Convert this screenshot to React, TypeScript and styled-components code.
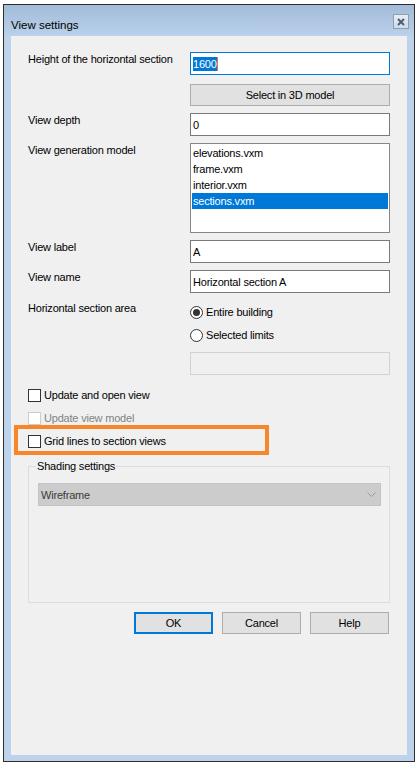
import * as React from "react"
import styled, { createGlobalStyle } from "styled-components"

const GlobalStyle = createGlobalStyle`
    body {
        margin: 0;
        background: #fff;
        font-family: "Liberation Sans", Arial, sans-serif;
    }
`

const Screen = styled.div`
    padding: 4px 0 0 3px;
`

const Window = styled.div`
    width: 412px;
    height: 758px;
    box-sizing: border-box;
    border: 1px solid #2e2e2e;
    background: #bcd3eb;
    display: flex;
    flex-direction: column;
    padding: 0 7px 6px 7px;
`

const TitleBar = styled.div`
    height: 31px;
    flex: none;
    margin: 0 -7px;
    padding: 9px 5px 0 7px;
    box-sizing: border-box;
    display: flex;
    justify-content: space-between;
    align-items: flex-start;
    background: linear-gradient(#a2bbd8, #bad1ea);
`

const Title = styled.span`
    margin-top: 4px;
    font-size: 11.5px;
    line-height: 14px;
    color: #000;
`

const CloseButton = styled.div`
    width: 16px;
    height: 15px;
    box-sizing: border-box;
    border: 1px solid #8d9db2;
    background: linear-gradient(#e6edf5, #cfdbe8);
    display: flex;
    align-items: center;
    justify-content: center;
`

const Client = styled.div`
    flex: 1;
    background: #f0f0f0;
    padding: 16px 17px 0 17px;
    font-size: 11px;
    letter-spacing: -0.2px;
    color: #000;
`

const FieldRow = styled.div<{ $gap?: number }>`
    display: grid;
    grid-template-columns: 162px 200px;
    align-items: start;
    margin-top: ${p => p.$gap ?? 0}px;
`

const FieldLabel = styled.div`
    padding-top: 1px;
    line-height: 13px;
`

const TextBox = styled.div<{ $focused?: boolean }>`
    height: 23px;
    box-sizing: border-box;
    border: 1px solid ${p => (p.$focused ? "#0078d7" : "#7a7a7a")};
    background: #fff;
    padding: 4px 2px 0 2px;
    line-height: 14px;
    white-space: nowrap;
`

const Selection = styled.span`
    background: #0078d7;
    color: #fff;
    border-right: 1px solid #e07a30;
    display: inline-block;
    line-height: 14px;
`

const DisabledBox = styled.div`
    height: 23px;
    margin-top: 1px;
    box-sizing: border-box;
    border: 1px solid #d2d2d2;
    background: #f0f0f0;
`

const PushButton = styled.div<{ $default?: boolean; $width?: number }>`
    grid-column: 2;
    width: ${p => (p.$width ? `${p.$width}px` : "auto")};
    height: 22px;
    box-sizing: border-box;
    border: ${p => (p.$default ? "2px solid #0078d7" : "1px solid #adadad")};
    background: #e1e1e1;
    display: flex;
    align-items: center;
    justify-content: center;
    line-height: 14px;
`

const ListBox = styled.div`
    height: 90px;
    box-sizing: border-box;
    border: 1px solid #828790;
    background: #fff;
    padding: 1px;
`

const ListItem = styled.div<{ $selected?: boolean }>`
    height: 16px;
    line-height: 16px;
    padding-left: 1px;
    background: ${p => (p.$selected ? "#0078d7" : "transparent")};
    color: ${p => (p.$selected ? "#fff" : "#000")};
`

const RadioList = styled.div`
    display: flex;
    flex-direction: column;
    gap: 9px;
    padding-top: 4px;
`

const RadioItem = styled.label`
    display: flex;
    align-items: center;
    gap: 3px;
    height: 14px;
    line-height: 14px;
`

const RadioMark = styled.span<{ $checked?: boolean }>`
    width: 13px;
    height: 13px;
    box-sizing: border-box;
    border: 1px solid #333;
    border-radius: 50%;
    background: #fff;
    display: flex;
    align-items: center;
    justify-content: center;

    &::after {
        content: "";
        display: ${p => (p.$checked ? "block" : "none")};
        width: 7px;
        height: 7px;
        border-radius: 50%;
        background: #333;
    }
`

const CheckList = styled.div`
    display: flex;
    flex-direction: column;
    gap: 9px;
    margin-top: 13px;
`

const CheckRow = styled.label<{ $disabled?: boolean; $marked?: boolean }>`
    position: relative;
    display: flex;
    align-items: center;
    gap: 3px;
    height: 14px;
    line-height: 14px;
    color: ${p => (p.$disabled ? "#838383" : "#000")};

    &::after {
        content: "";
        display: ${p => (p.$marked ? "block" : "none")};
        position: absolute;
        left: -14px;
        top: -9px;
        width: 255px;
        height: 30px;
        box-sizing: border-box;
        border: 4px solid #f7852a;
        pointer-events: none;
    }
`

const CheckMark = styled.span<{ $disabled?: boolean }>`
    width: 13px;
    height: 13px;
    box-sizing: border-box;
    border: 1px solid ${p => (p.$disabled ? "#cccccc" : "#333")};
    background: #fff;
`

const GroupBox = styled.fieldset`
    margin: 12px 0 0 0;
    width: 362px;
    height: 143px;
    box-sizing: border-box;
    border: 1px solid #dcdcdc;
    padding: 10px 8px 0 9px;
    min-width: 0;
`

const Legend = styled.legend`
    padding: 0 1px;
    margin-left: -2px;
    line-height: 13px;
`

const ComboBox = styled.div`
    height: 23px;
    box-sizing: border-box;
    border: 1px solid #c4c4c4;
    background: #cccccc;
    color: #3a3a3a;
    display: flex;
    align-items: center;
    justify-content: space-between;
    padding: 0 4px 0 2px;
`

const ButtonBar = styled.div`
    width: 361px;
    display: flex;
    justify-content: flex-end;
    gap: 9px;
    margin-top: 9px;
`

const CloseGlyph = () => (
    <svg width="8" height="8" viewBox="0 0 8 8">
        <path d="M1 1 L7 7 M7 1 L1 7" stroke="#4e5d73" strokeWidth="2" />
    </svg>
)

const Chevron = () => (
    <svg width="9" height="6" viewBox="0 0 9 6">
        <path d="M0.5 0.5 L4.5 4.5 L8.5 0.5" fill="none" stroke="#9a9a9a" strokeWidth="1" />
    </svg>
)

const models = ["elevations.vxm", "frame.vxm", "interior.vxm", "sections.vxm"]

const App: React.FunctionComponent = () => {
    const [selectedModel] = React.useState("sections.vxm")

    return <Screen>
        <GlobalStyle />
        <Window>
            <TitleBar>
                <Title>View settings</Title>
                <CloseButton><CloseGlyph /></CloseButton>
            </TitleBar>
            <Client>
                <FieldRow>
                    <FieldLabel>Height of the horizontal section</FieldLabel>
                    <TextBox $focused><Selection>1600</Selection></TextBox>
                </FieldRow>
                <FieldRow $gap={9}>
                    <PushButton>Select in 3D model</PushButton>
                </FieldRow>
                <FieldRow $gap={7}>
                    <FieldLabel>View depth</FieldLabel>
                    <TextBox>0</TextBox>
                </FieldRow>
                <FieldRow $gap={7}>
                    <FieldLabel>View generation model</FieldLabel>
                    <ListBox>
                        {models.map(m => <ListItem key={m} $selected={m == selectedModel}>{m}</ListItem>)}
                    </ListBox>
                </FieldRow>
                <FieldRow $gap={7}>
                    <FieldLabel>View label</FieldLabel>
                    <TextBox>A</TextBox>
                </FieldRow>
                <FieldRow $gap={7}>
                    <FieldLabel>View name</FieldLabel>
                    <TextBox>Horizontal section A</TextBox>
                </FieldRow>
                <FieldRow $gap={8}>
                    <FieldLabel>Horizontal section area</FieldLabel>
                    <RadioList>
                        <RadioItem><RadioMark $checked />Entire building</RadioItem>
                        <RadioItem><RadioMark />Selected limits</RadioItem>
                        <DisabledBox />
                    </RadioList>
                </FieldRow>

                <CheckList>
                    <CheckRow><CheckMark />Update and open view</CheckRow>
                    <CheckRow $disabled><CheckMark $disabled />Update view model</CheckRow>
                    <CheckRow $marked><CheckMark />Grid lines to section views</CheckRow>
                </CheckList>

                <GroupBox>
                    <Legend>Shading settings</Legend>
                    <ComboBox>
                        <span>Wireframe</span>
                        <Chevron />
                    </ComboBox>
                </GroupBox>

                <ButtonBar>
                    <PushButton $default $width={79}>OK</PushButton>
                    <PushButton $width={79}>Cancel</PushButton>
                    <PushButton $width={79}>Help</PushButton>
                </ButtonBar>
            </Client>
        </Window>
    </Screen>
}

export default App
